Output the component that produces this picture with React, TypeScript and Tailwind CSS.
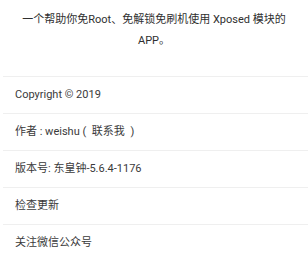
const rows = [
  'Copyright © 2019',
  '作者 : weishu (\u2002联系我\u2002)',
  '版本号: 东皇钟-5.6.4-1176',
  '检查更新',
  '关注微信公众号',
];

export default function App() {
  return (
    <div
      className="w-[308px] h-[254px] overflow-hidden bg-white text-[#333]"
      style={{ fontFamily: 'Roboto, "Noto Sans CJK SC", sans-serif' }}
    >
      {/* Description */}
      <div className="h-[76px] px-4 pt-[9px] text-center text-[11px] leading-[21px] text-[#2f2f2f]">
        一个帮助你免Root、免解锁免刷机使用 Xposed 模块的APP。
      </div>

      {/* About list */}
      <div className="ml-[3px]">
        {rows.map((label) => (
          <div
            key={label}
            className="h-[37px] border-t border-[#efefef] flex items-center pl-3 pt-px text-[11px] text-[#3a3a3a] whitespace-pre"
          >
            {label}
          </div>
        ))}
      </div>
    </div>
  );
}
